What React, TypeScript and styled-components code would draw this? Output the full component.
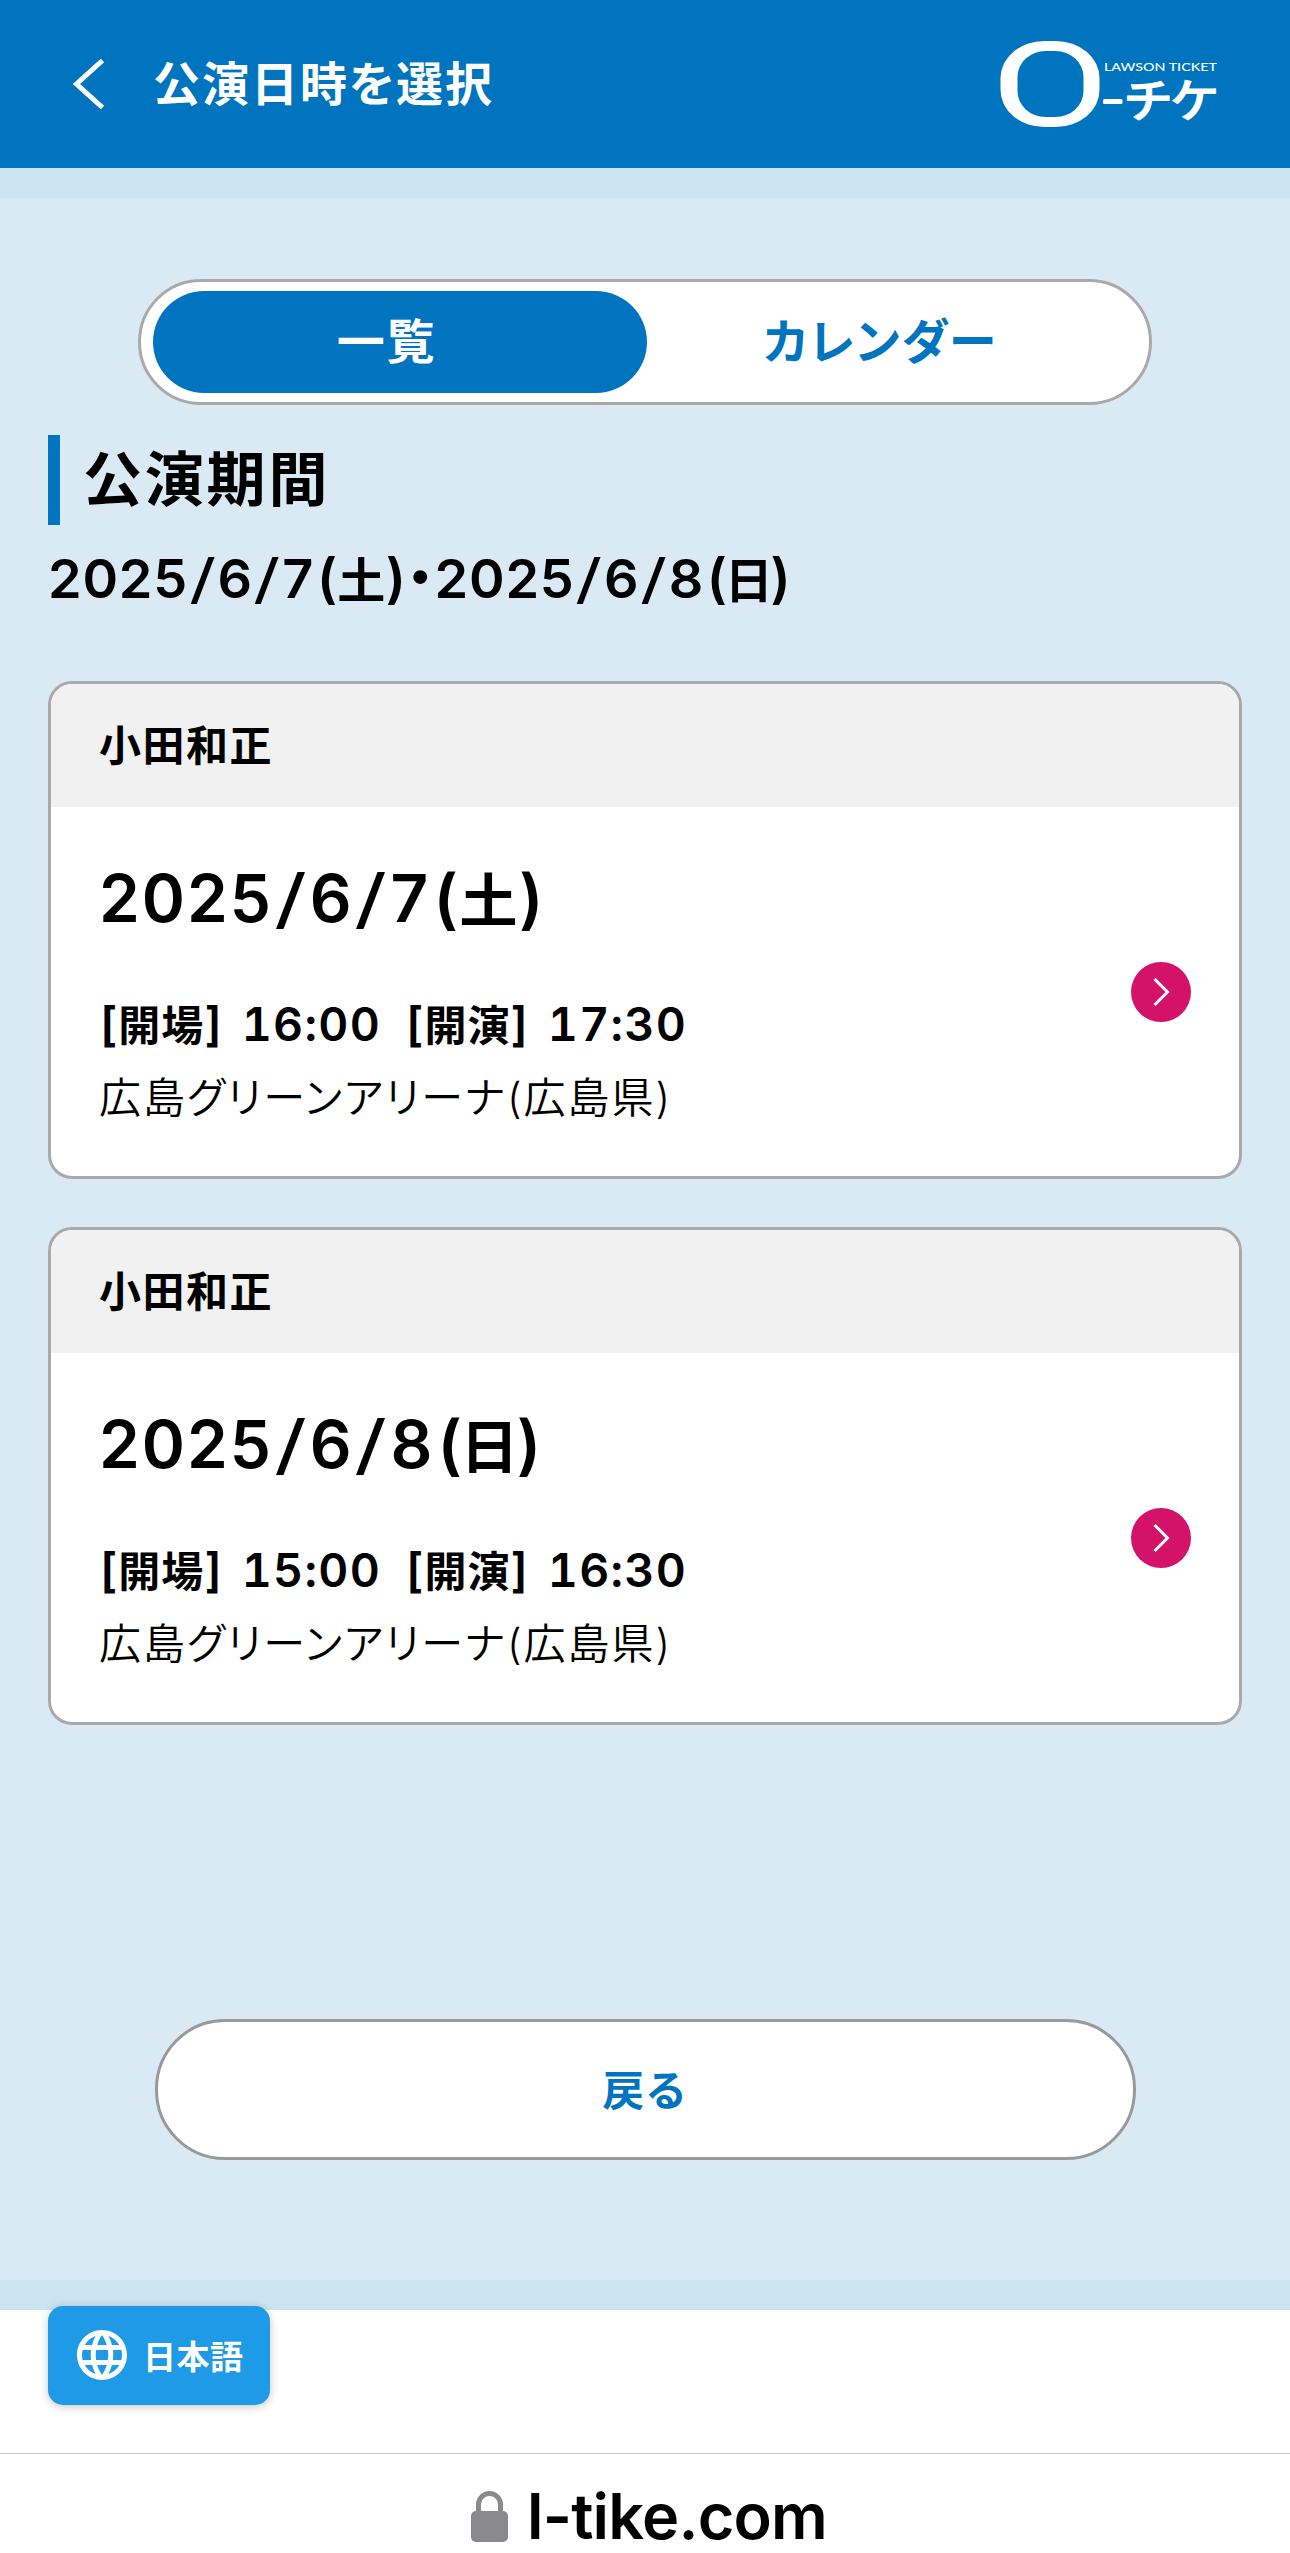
import React from "react";
import styled, { createGlobalStyle } from "styled-components";

const BLUE = "#0074be";

const GlobalStyle = createGlobalStyle`
  *, *::before, *::after { box-sizing: border-box; }
  body {
    margin: 0;
    background: #fff;
    color: #000;
    font-family: Inter, "Noto Sans CJK JP", sans-serif;
    font-feature-settings: "palt";
    -webkit-font-smoothing: antialiased;
  }
  button { font: inherit; font-feature-settings: inherit; color: inherit; margin: 0; padding: 0; border: 0; background: none; }
  h1, h2, h3, p { margin: 0; font-weight: inherit; font-size: inherit; }
  svg { display: block; flex: none; }
`;

const Page = styled.div`
  width: 1290px;
  height: 2553px;
  overflow: hidden;
  display: flex;
  flex-direction: column;
`;

const Header = styled.header`
  height: 168px;
  flex: none;
  display: flex;
  align-items: center;
  padding: 0 73px 0 73px;
  background: ${BLUE};
  color: #fff;
`;

const BackIcon = styled.button`
  width: 80px;
  height: 50px;
`;

const HeaderTitle = styled.h1`
  flex: 1;
  font-size: 47px;
  line-height: 60px;
  font-weight: 600;
  letter-spacing: 2px;
`;

const Main = styled.main`
  flex: none;
  height: 2142px;
  display: flex;
  flex-direction: column;
  padding: 81px 48px 0;
  background: #d9eaf4;
  border: solid #cce3f1;
  border-width: 30px 0;
`;

const Tabs = styled.div`
  align-self: center;
  width: 1014px;
  height: 126px;
  display: grid;
  grid-template-columns: 494px 1fr;
  padding: 9px 12px;
  border: 3px solid #a9a9a9;
  border-radius: 63px;
  background: #fff;
`;

const Tab = styled.button<{ $active?: boolean }>`
  border-radius: 51px;
  height: 102px;
  font-size: 48px;
  line-height: 72px;
  padding-right: ${(p) => (p.$active ? 27 : 23)}px;
  font-weight: 700;
  letter-spacing: 1.7px;
  background: ${(p) => (p.$active ? BLUE : "transparent")};
  color: ${(p) => (p.$active ? "#fff" : BLUE)};
`;

const SectionTitle = styled.h2`
  margin-top: 30px;
  height: 90px;
  line-height: 90px;
  border-left: 12px solid ${BLUE};
  padding-left: 23px;
  font-size: 59px;
  font-weight: 600;
  letter-spacing: 2.8px;
`;

const Period = styled.p`
  margin-top: 14px;
  height: 80px;
  line-height: 80px;
  font-size: 54px;
  font-weight: 600;
  letter-spacing: 0.8px;
  white-space: nowrap;
`;

const Slash = styled.span`
  display: inline-block;
  margin: 0 0.085em;
  font-weight: 400;
  transform: scaleX(1.4);
`;

const Weekday = styled.span`
  margin-left: 0.05em;
`;

const WeekdayName = styled.span<{ $narrow: boolean }>`
  font-size: 0.89em;
  margin: 0 ${(p) => (p.$narrow ? "-0.065em" : "-0.01em")};
`;

const CardList = styled.div`
  margin-top: 62px;
  display: flex;
  flex-direction: column;
  gap: 48px;
`;

const Card = styled.article`
  height: 498px;
  border: 3px solid #a9a9a9;
  border-radius: 24px;
  overflow: hidden;
  background: #fff;
  display: flex;
  flex-direction: column;
`;

const CardHead = styled.h3`
  height: 123px;
  flex: none;
  padding: 0 48px;
  line-height: 124px;
  background: #f1f1f1;
  font-size: 42px;
  font-weight: 600;
  letter-spacing: 1.5px;
`;

const CardBody = styled.div`
  flex: 1;
  display: flex;
  align-items: center;
  justify-content: space-between;
  padding: 0 48px 0 48px;
`;

const Info = styled.div`
  padding-top: 2px;
  display: flex;
  flex-direction: column;
  white-space: nowrap;
`;

const ShowDate = styled.p`
  font-size: 65.5px;
  line-height: 90px;
  font-weight: 600;
  letter-spacing: 2px;
`;

const Times = styled.p`
  margin-top: 43px;
  padding-left: 1px;
  font-size: 46.5px;
  line-height: 70px;
  font-weight: 600;
  letter-spacing: 1px;
`;

const TimeLabel = styled.span`
  font-size: 42px;
`;

const TimeValue = styled.span`
  margin: 0 25px 0 19px;
  letter-spacing: 1.3px;
  font-feature-settings: "tnum";
`;

const Venue = styled.p`
  margin-top: 3px;
  font-size: 42px;
  line-height: 68px;
  font-weight: 350;
  letter-spacing: 2px;
`;

const ReturnButton = styled.button`
  align-self: center;
  margin-top: 294px;
  width: 981px;
  height: 141px;
  padding: 0 1px 4px 0;
  border: 3px solid #999;
  border-radius: 70px;
  background: #fff;
  color: ${BLUE};
  font-size: 42px;
  font-weight: 700;
  letter-spacing: 1.8px;
`;

const Footer = styled.footer`
  flex: none;
  height: 143px;
  padding-left: 48px;
`;

const LanguageButton = styled.button`
  position: relative;
  margin-top: -4px;
  width: 222px;
  height: 99px;
  display: flex;
  align-items: center;
  gap: 16px;
  padding: 0 0 1px 29px;
  border-radius: 15px;
  background: #1e9ae6;
  box-shadow: 0 2px 10px rgba(0, 0, 0, 0.22);
  color: #fff;
  font-size: 33px;
  font-weight: 700;
  letter-spacing: 0.5px;
`;

const AddressBar = styled.div`
  flex: 1;
  display: flex;
  justify-content: center;
  align-items: flex-start;
  gap: 19px;
  padding: 37px 0 0 8px;
  border-top: 1px solid #c4c4c6;
`;

const Domain = styled.span`
  margin-top: -8px;
  font-size: 63px;
  line-height: 66px;
  font-weight: 600;
  letter-spacing: -0.8px;
`;

const Logo = () => (
  <svg width="218" height="90" viewBox="0 0 218 90" role="img" aria-label="LAWSON TICKET">
    <rect x="1.5" y="2" width="99" height="86" rx="44" ry="37" fill="#fff" />
    <rect x="18.5" y="12" width="66" height="66" rx="28" ry="26" fill={BLUE} />
    <rect x="104" y="60" width="19.5" height="5" rx="1.5" fill="#fff" />
    <text x="105" y="32" fill="#fff" fontFamily="Lato" fontSize="12" fontWeight="500" textLength="113" lengthAdjust="spacingAndGlyphs">
      LAWSON TICKET
    </text>
    <text x="126" y="78" fill="#fff" fontFamily="Noto Sans CJK JP" fontSize="46" fontWeight="500" stroke="#fff" strokeWidth="0.8" strokeLinejoin="round" textLength="92" lengthAdjust="spacingAndGlyphs">
      チケ
    </text>
  </svg>
);

type DateParts = { ymd: [string, string, string]; weekday: string };

const DateText = ({ ymd, weekday }: DateParts) => (
  <>
    {ymd[0]}
    <Slash>/</Slash>
    {ymd[1]}
    <Slash>/</Slash>
    {ymd[2]}
    <Weekday>
      (<WeekdayName $narrow={weekday === "日"}>{weekday}</WeekdayName>)
    </Weekday>
  </>
);

const shows: { artist: string; date: DateParts; open: string; start: string; venue: string }[] = [
  { artist: "小田和正", date: { ymd: ["2025", "6", "7"], weekday: "土" }, open: "16:00", start: "17:30", venue: "広島グリーンアリーナ(広島県)" },
  { artist: "小田和正", date: { ymd: ["2025", "6", "8"], weekday: "日" }, open: "15:00", start: "16:30", venue: "広島グリーンアリーナ(広島県)" },
];

const ArrowBadge = () => (
  <svg width="60" height="60" viewBox="0 0 60 60">
    <circle cx="30" cy="30" r="30" fill="#d4126a" />
    <path d="M23.5 17L36.5 30L23.5 43" fill="none" stroke="#fff" strokeWidth="3" />
  </svg>
);

export default function App() {
  return (
    <>
      <GlobalStyle />
      <Page>
        <Header>
          <BackIcon aria-label="戻る">
            <svg width="32" height="50" viewBox="0 0 32 50">
              <path d="M29.5 1.5L3.5 25L29.5 48.5" fill="none" stroke="#fff" strokeWidth="5" />
            </svg>
          </BackIcon>
          <HeaderTitle>公演日時を選択</HeaderTitle>
          <Logo />
        </Header>
        <Main>
          <Tabs>
            <Tab $active>一覧</Tab>
            <Tab>カレンダー</Tab>
          </Tabs>
          <SectionTitle>公演期間</SectionTitle>
          <Period>
            <DateText {...shows[0].date} />・<DateText {...shows[1].date} />
          </Period>
          <CardList>
            {shows.map((s) => (
              <Card key={s.date.weekday}>
                <CardHead>{s.artist}</CardHead>
                <CardBody>
                  <Info>
                    <ShowDate>
                      <DateText {...s.date} />
                    </ShowDate>
                    <Times>
                      [<TimeLabel>開場</TimeLabel>]<TimeValue>{s.open}</TimeValue>
                      [<TimeLabel>開演</TimeLabel>]<TimeValue>{s.start}</TimeValue>
                    </Times>
                    <Venue>{s.venue}</Venue>
                  </Info>
                  <ArrowBadge />
                </CardBody>
              </Card>
            ))}
          </CardList>
          <ReturnButton>戻る</ReturnButton>
        </Main>
        <Footer>
          <LanguageButton>
            <svg width="50" height="50" viewBox="2 2 20 20" fill="#fff">
              <path d="M11.99 2C6.47 2 2 6.48 2 12s4.47 10 9.99 10C17.52 22 22 17.52 22 12S17.52 2 11.99 2zm6.93 6h-2.95c-.32-1.25-.78-2.45-1.38-3.56 1.84.63 3.37 1.91 4.33 3.56zM12 4.04c.83 1.2 1.48 2.53 1.91 3.96h-3.82c.43-1.43 1.08-2.76 1.91-3.96zM4.26 14C4.1 13.36 4 12.69 4 12s.1-1.36.26-2h3.38c-.08.66-.14 1.32-.14 2s.06 1.34.14 2H4.26zm.82 2h2.95c.32 1.25.78 2.45 1.38 3.56-1.84-.63-3.37-1.9-4.33-3.56zm2.95-8H5.08c.96-1.66 2.49-2.93 4.33-3.56C8.81 5.55 8.35 6.75 8.03 8zM12 19.96c-.83-1.2-1.48-2.53-1.91-3.96h3.82c-.43 1.43-1.08 2.76-1.91 3.96zM14.34 14H9.66c-.09-.66-.16-1.32-.16-2s.07-1.35.16-2h4.68c.09.65.16 1.32.16 2s-.07 1.34-.16 2zm.25 5.56c.6-1.11 1.06-2.31 1.38-3.56h2.95c-.96 1.65-2.49 2.93-4.33 3.56zM16.36 14c.08-.66.14-1.32.14-2s-.06-1.34-.14-2h3.38c.16.64.26 1.31.26 2s-.1 1.36-.26 2h-3.38z" />
            </svg>
            <span>日本語</span>
          </LanguageButton>
        </Footer>
        <AddressBar>
          <svg width="37" height="52" viewBox="0 0 37 52">
            <path d="M7.5 23V13.5a11 11 0 0 1 22 0V23" fill="none" stroke="#8a898e" strokeWidth="5" />
            <rect x="0" y="20" width="37" height="31" rx="5" fill="#8a898e" />
          </svg>
          <Domain>l-tike.com</Domain>
        </AddressBar>
      </Page>
    </>
  );
}
